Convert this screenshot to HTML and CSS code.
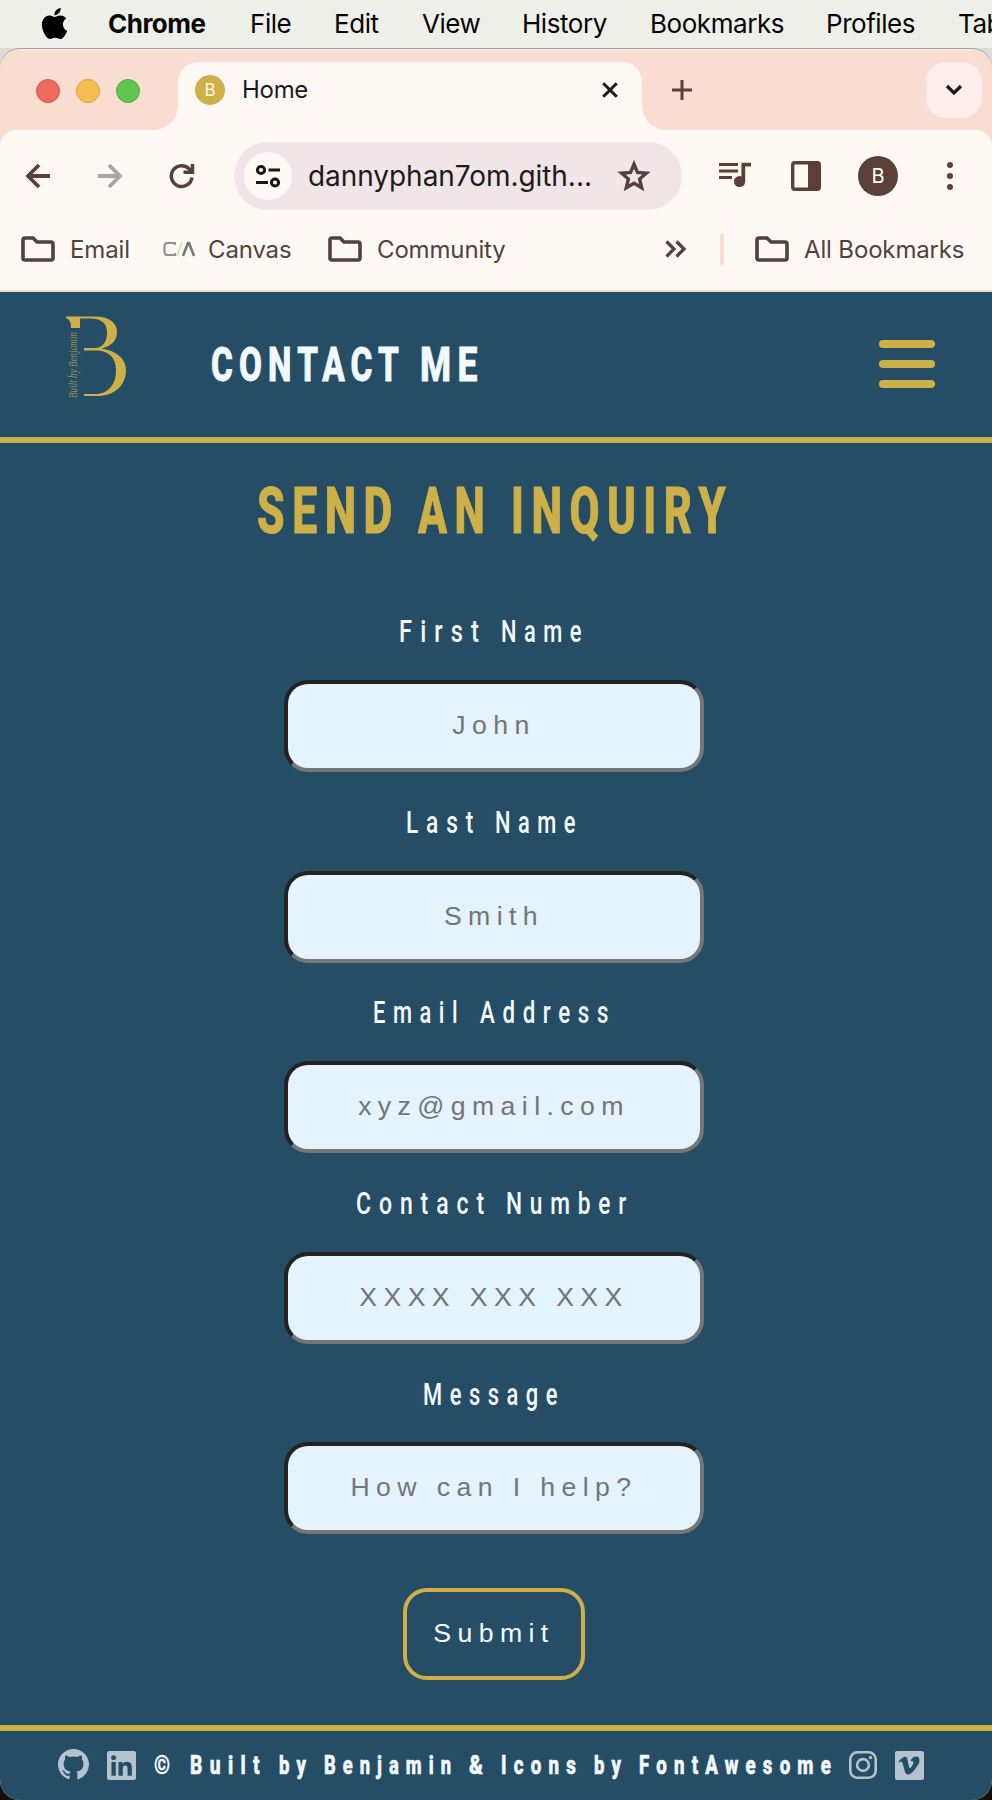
FILE: index.html
```html
<!DOCTYPE html>
<html lang="en">
<head>
<meta charset="utf-8">
<title>Home</title>
<link rel="stylesheet" href="styles.css">
</head>
<body>
<svg class="defs" width="0" height="0">
  <symbol id="folder" viewBox="0 0 34 26"><path d="M4 2H12L16 6H30Q32 6 32 8V22Q32 24 30 24H4Q2 24 2 22V4Q2 2 4 2Z" fill="none" stroke="#51423e" stroke-width="3.6"/></symbol>
</svg>
<nav class="menubar">
  <svg class="apple" viewBox="0 0 24 24"><path d="M12.152 6.896c-.948 0-2.415-1.078-3.96-1.04-2.04.027-3.91 1.183-4.961 3.014-2.117 3.675-.546 9.103 1.519 12.09 1.013 1.454 2.208 3.09 3.792 3.039 1.52-.065 2.09-.987 3.935-.987 1.831 0 2.35.987 3.96.948 1.637-.026 2.676-1.48 3.676-2.948 1.156-1.688 1.636-3.325 1.662-3.415-.039-.013-3.182-1.221-3.22-4.857-.026-3.04 2.48-4.494 2.597-4.559-1.429-2.09-3.623-2.324-4.39-2.376-2-.156-3.675 1.09-4.61 1.09zM15.53 3.83c.843-1.012 1.4-2.427 1.245-3.83-1.207.052-2.662.805-3.532 1.818-.78.896-1.454 2.338-1.273 3.714 1.338.104 2.715-.688 3.559-1.701"/></svg>
  <b>Chrome</b><span>File</span><span>Edit</span><span>View</span><span>History</span><span>Bookmarks</span><span>Profiles</span><span>Tab</span>
</nav>
<div class="window">
  <div class="tabstrip">
    <div class="lights"><i class="red"></i><i class="amber"></i><i class="green"></i></div>
    <div class="tab">
      <span class="favicon">B</span><span class="tab-title">Home</span>
      <svg class="close" width="16" height="16" viewBox="0 0 16 16"><path d="M1.2 1.2L14.8 14.8M14.8 1.2L1.2 14.8" stroke="#1f1a19" stroke-width="3"/></svg>
    </div>
    <svg class="plus" width="20" height="20" viewBox="0 0 20 20"><path d="M10 0V20M0 10H20" stroke="#5b4037" stroke-width="3"/></svg>
    <div class="tabsearch"><svg width="18" height="12" viewBox="0 0 18 12"><path d="M2 2L9 9L16 2" fill="none" stroke="#1f1a19" stroke-width="3.2"/></svg></div>
  </div>
  <div class="toolbar">
    <svg class="back" width="26" height="26" viewBox="0 0 26 26"><path d="M25 13H3M14 2L3 13L14 24" fill="none" stroke="#5b4037" stroke-width="3.8"/></svg>
    <svg class="forward" width="26" height="26" viewBox="0 0 26 26"><path d="M1 13H23M12 2L23 13L12 24" fill="none" stroke="#aaa5a3" stroke-width="3.8"/></svg>
    <svg class="reload" width="26" height="26" viewBox="0 0 26 26"><path d="M23 14.5A10.4 10.4 0 1 1 20.5 6.2L23 8.7M23.5 1V9.3H14.5" fill="none" stroke="#5b4037" stroke-width="3.5"/></svg>
    <div class="omnibox">
      <span class="site"><svg width="26" height="24" viewBox="0 0 26 24" fill="none" stroke="#1b1716" stroke-width="3"><circle cx="6" cy="6" r="3.6"/><path d="M13.5 6H25M1 18.5H13"/><circle cx="20" cy="18.5" r="3.6"/></svg></span>
      <span class="url">dannyphan7om.gith...</span>
      <svg class="star" width="34" height="32" viewBox="0 0 34 32"><path d="M17 4.200L20.400 12.400L29.400 13.200L22.600 19L24.700 27.800L17 23.200L9.300 27.800L11.400 19L4.600 13.200L13.600 12.400Z" fill="none" stroke="#51423e" stroke-width="3.400"/></svg>
    </div>
    <svg class="queue" width="32" height="26" viewBox="0 0 32 26"><path d="M0 2.600H19M0 9H19M0 15.500H13" stroke="#5b4037" stroke-width="3"/><path d="M24.300 19V2.600H32" fill="none" stroke="#5b4037" stroke-width="3.800"/><circle cx="20.600" cy="19.500" r="5.600" fill="#5b4037"/></svg>
    <svg class="panel" width="30" height="30" viewBox="0 0 30 30"><rect x="1.700" y="1.700" width="26.600" height="26.600" rx="2" fill="none" stroke="#5b4037" stroke-width="3.400"/><path d="M17 2H28V28H17Z" fill="#5b4037"/></svg>
    <span class="avatar">B</span>
    <svg class="dots" width="6" height="28" viewBox="0 0 6 28" fill="#5b4037"><circle cx="3" cy="3" r="3"/><circle cx="3" cy="14" r="3"/><circle cx="3" cy="25" r="3"/></svg>
  </div>
  <div class="bookmarks">
    <svg class="f1" width="34" height="26"><use href="#folder"/></svg><span class="t-email">Email</span>
    <svg class="ca" width="34" height="16" viewBox="0 0 34 16" fill="none"><path d="M12 4V2H3L1.500 4V12L3 14H12V12" stroke="#929292" stroke-width="2.200"/><path d="M14 15L19 1" stroke="#bdeab8" stroke-width="1.600"/><path d="M20 15L25 2H26L31 15" stroke="#777" stroke-width="2.600"/></svg><span class="t-canvas">Canvas</span>
    <svg class="f2" width="34" height="26"><use href="#folder"/></svg><span class="t-comm">Community</span>
    <svg class="more" width="22" height="18" viewBox="0 0 22 18"><path d="M1.500 1.500L9 9L1.500 16.500M11.500 1.500L19 9L11.500 16.500" fill="none" stroke="#51423e" stroke-width="3.200"/></svg>
    <i class="divider"></i>
    <svg class="f3" width="34" height="26"><use href="#folder"/></svg><span class="t-all">All Bookmarks</span>
  </div>
  <div class="page">
    <header>
      <svg class="logo" width="64" height="88" viewBox="0 0 64 88">
        <path d="M1 1.500H30C44 1.500 52 7.500 52 17C52 26 46 31 36.500 33.500C52 36 61 44 61 55C61 71 49 81 32 81H19V79H30C44 79 51 69 51 55C51 42 43 35.500 31 35.500H19V33H29C38 33 42 27 42 17.500C42 8 36 3.500 25 3.500H15V13H6C6 7 5 5 1 3Z" fill="#cdb048"/>
        <text transform="translate(12 83) rotate(-90)" textLength="66" lengthAdjust="spacingAndGlyphs">Built by Benjamin</text>
      </svg>
      <svg class="display title" width="300" height="80" viewBox="200 320 300 80">
        <text x="211" y="381" textLength="194" lengthAdjust="spacingAndGlyphs">CONTACT</text>
        <text x="420" y="381" textLength="64" lengthAdjust="spacingAndGlyphs">ME</text>
      </svg>
      <div class="burger"><i></i><i></i><i></i></div>
    </header>
    <main>
      <svg class="display heading" width="992" height="90" viewBox="0 467 992 90">
        <text x="257" y="533" textLength="143" lengthAdjust="spacingAndGlyphs">SEND</text>
        <text x="418" y="533" textLength="74" lengthAdjust="spacingAndGlyphs">AN</text>
        <text x="511" y="533" textLength="222" lengthAdjust="spacingAndGlyphs">INQUIRY</text>
      </svg>
      <form>
        <label><svg class="display" width="992" height="50" viewBox="0 606 992 50"><text x="399" y="642" textLength="88" lengthAdjust="spacingAndGlyphs">First</text><text x="501" y="642" textLength="88" lengthAdjust="spacingAndGlyphs">Name</text></svg>
        <input type="text" placeholder="John"></label>
        <label><svg class="display" width="992" height="50" viewBox="0 797 992 50"><text x="406" y="833" textLength="75" lengthAdjust="spacingAndGlyphs">Last</text><text x="495" y="833" textLength="88" lengthAdjust="spacingAndGlyphs">Name</text></svg>
        <input type="text" placeholder="Smith"></label>
        <label><svg class="display" width="992" height="50" viewBox="0 987 992 50"><text x="373" y="1023" textLength="92" lengthAdjust="spacingAndGlyphs">Email</text><text x="480" y="1023" textLength="136" lengthAdjust="spacingAndGlyphs">Address</text></svg>
        <input type="text" placeholder="xyz@gmail.com"></label>
        <label><svg class="display" width="992" height="50" viewBox="0 1178 992 50"><text x="356" y="1214" textLength="136" lengthAdjust="spacingAndGlyphs">Contact</text><text x="506" y="1214" textLength="128" lengthAdjust="spacingAndGlyphs">Number</text></svg>
        <input type="text" placeholder="XXXX XXX XXX"></label>
        <label><svg class="display" width="992" height="50" viewBox="0 1368 992 50"><text x="423" y="1405" textLength="142" lengthAdjust="spacingAndGlyphs">Message</text></svg>
        <input type="text" placeholder="How can I help?"></label>
        <button type="button">Submit</button>
      </form>
    </main>
    <footer>
      <svg class="github" width="31" height="31" viewBox="0 0 16 16"><path d="M8 0C3.58 0 0 3.58 0 8c0 3.54 2.29 6.53 5.47 7.59.4.07.55-.17.55-.38 0-.19-.01-.82-.01-1.49-2.01.37-2.53-.49-2.69-.94-.09-.23-.48-.94-.82-1.13-.28-.15-.68-.52-.01-.53.63-.01 1.08.58 1.23.82.72 1.21 1.87.87 2.33.66.07-.52.28-.87.51-1.07-1.78-.2-3.64-.89-3.64-3.95 0-.87.31-1.59.82-2.15-.08-.2-.36-1.02.08-2.12 0 0 .67-.21 2.2.82.64-.18 1.32-.27 2-.27s1.36.09 2 .27c1.53-1.04 2.2-.82 2.2-.82.44 1.1.16 1.92.08 2.12.51.56.82 1.27.82 2.15 0 3.07-1.87 3.75-3.65 3.95.29.25.54.73.54 1.48 0 1.07-.01 1.93-.01 2.2 0 .21.15.46.55.38A8.01 8.01 0 0 0 16 8c0-4.42-3.58-8-8-8z"/></svg>
      <svg class="linkedin" width="29" height="29" viewBox="0 32 448 448"><path d="M416 32H31.900C14.300 32 0 46.500 0 64.300v383.400C0 465.500 14.300 480 31.900 480H416c17.600 0 32-14.500 32-32.300V64.300c0-17.800-14.400-32.300-32-32.300zM135.400 416H69V202.200h66.500V416zm-33.200-243c-21.300 0-38.500-17.300-38.500-38.500S80.900 96 102.200 96c21.200 0 38.500 17.300 38.500 38.500 0 21.300-17.200 38.500-38.500 38.500zm282.100 243h-66.400V312c0-24.800-.5-56.700-34.500-56.700-34.600 0-39.900 27-39.900 54.900V416h-66.400V202.200h63.700v29.200h.9c8.900-16.800 30.600-34.500 62.900-34.500 67.200 0 79.700 44.300 79.700 101.900V416z"/></svg>
      <svg class="display credit" width="694" height="50" viewBox="146 1739 694 50">
        <text x="154" y="1774" textLength="24" lengthAdjust="spacingAndGlyphs">©</text>
        <text x="190" y="1774" textLength="77" lengthAdjust="spacingAndGlyphs">Built</text>
        <text x="279" y="1774" textLength="34" lengthAdjust="spacingAndGlyphs">by</text>
        <text x="324" y="1774" textLength="134" lengthAdjust="spacingAndGlyphs">Benjamin</text>
        <text x="469" y="1774" textLength="22" lengthAdjust="spacingAndGlyphs">&amp;</text>
        <text x="501" y="1774" textLength="82" lengthAdjust="spacingAndGlyphs">Icons</text>
        <text x="594" y="1774" textLength="34" lengthAdjust="spacingAndGlyphs">by</text>
        <text x="639" y="1774" textLength="199" lengthAdjust="spacingAndGlyphs">FontAwesome</text>
      </svg>
      <svg class="insta" width="28" height="28" viewBox="0 0 28 28"><rect x="1.300" y="1.300" width="25.400" height="25.400" rx="7" fill="none" stroke="#b4c3cd" stroke-width="2.600"/><circle cx="14" cy="14" r="5.900" fill="none" stroke="#b4c3cd" stroke-width="2.600"/><circle cx="21.500" cy="6.500" r="1.700"/></svg>
      <svg class="vimeo" width="29" height="29" viewBox="0 32 448 448"><path d="M416 32H32C14 32 0 46 0 64v384c0 18 14 32 32 32h384c18 0 32-14 32-32V64c0-18-14-32-32-32zM377 180.800c-1.400 31.500-23.400 74.700-66 129.400-44 57.200-81.300 85.800-111.700 85.800-18.900 0-34.800-17.400-47.900-52.300-25.500-93.300-36.400-148-57.400-148-2.400 0-10.900 5.100-25.400 15.200l-15.200-19.600c37.300-32.800 72.900-69.200 95.200-71.200 25.200-2.400 40.700 14.800 46.500 51.700 20.700 131.200 29.900 151 67.600 91.600 13.500-21.400 20.800-37.700 21.800-48.900 3.500-33.200-25.900-30.900-45.800-22.400 15.900-52.100 46.300-77.400 91.200-76 33.300.9 49 22.500 47.100 64.700z"/></svg>
    </footer>
  </div>
</div>
</body>
</html>
```
FILE: styles.css
```css
* { box-sizing: border-box; }
body { margin: 0; width: 992px; height: 1800px; overflow: hidden; background: linear-gradient(#dcdcd4 200px, #11110d 200px); font-family: Inter, "Liberation Sans", sans-serif; }
svg { display: block; flex: none; }
.defs { position: absolute; }
i { display: block; flex: none; }

.menubar { height: 48px; padding-bottom: 2px; background: #efefe9; display: grid; grid-template-columns: 108px 142px 84px 88px 100px 128px 176px 132px 60px; align-items: center; font-size: 26px; letter-spacing: -0.45px; color: #050505; white-space: nowrap; overflow: hidden; }
.menubar b { letter-spacing: -0.5px; }
.apple { width: 31px; height: 31px; margin: 0 0 0 38.5px; }

.window { height: 1751px; margin-top: 1px; border-radius: 20px; overflow: hidden; background: #f9ddd1; box-shadow: 0 -1px 0 #a3a39e; position: relative; border-top: 2px solid #fbe9e1; }
.tabstrip { height: 79px; background: #f9ddd1; display: flex; padding-top: 11px; }
.lights { width: 178px; padding: 17px 0 0 36px; display: flex; gap: 16px; }
.lights i { width: 24px; height: 24px; border-radius: 50%; }
.red { background: #ec6a5e; border: 1px solid #d35349; }
.amber { background: #f5bf4f; border: 1px solid #d9a33c; }
.green { background: #61c654; border: 1px solid #4fab43; }
.tab { width: 464px; height: 68px; background: #fff9f6; border-radius: 20px 20px 0 0; display: flex; align-items: center; padding: 0 24px 12px 17px; position: relative; }
.tab::before, .tab::after { content: ""; position: absolute; bottom: 0; width: 24px; height: 24px; }
.tab::before { left: -24px; background: radial-gradient(circle at 0 0, #f9ddd1 23.5px, #fff9f6 24px); }
.tab::after { right: -24px; background: radial-gradient(circle at 100% 0, #f9ddd1 23.5px, #fff9f6 24px); }
.favicon { width: 30px; height: 30px; border-radius: 50%; background: #cdb048; color: #fff8e8; font-size: 17px; line-height: 30px; text-align: center; }
.tab-title { margin: -1px 0 0 17px; font-size: 24px; letter-spacing: -0.3px; color: #1f1a19; }
.close { margin-left: auto; }
.plus { margin: 18px 0 0 30px; }
.tabsearch { width: 56px; height: 56px; margin-left: 234px; border-radius: 20px; background: #fceeea; display: grid; place-items: center; }

.toolbar { height: 92px; padding-top: 12px; background: #fff9f6; border-radius: 16px 16px 0 0; display: flex; align-items: flex-start; }
.back { margin: 21px 0 0 25px; }
.forward { margin: 21px 0 0 46px; }
.reload { margin: 21px 0 0 46px; }
.omnibox { width: 448px; height: 68px; margin-left: 39px; border-radius: 34px; background: #f0e6e7; display: flex; align-items: center; padding-left: 10px; }
.site { width: 48px; height: 48px; border-radius: 50%; background: #fff9f6; display: grid; place-items: center; flex: none; }
.url { width: 325px; flex: none; padding-left: 16px; font-size: 28px; letter-spacing: -0.05px; color: #211a1a; white-space: nowrap; }
.queue { margin: 20px 0 0 37px; }
.panel { margin: 19px 0 0 40px; }
.avatar { width: 40px; height: 40px; margin: 14px 0 0 37px; border-radius: 50%; background: #5b4037; color: #fff; font-size: 20px; line-height: 40px; text-align: center; }
.dots { margin: 20px 0 0 49px; }

.bookmarks { height: 70px; padding-bottom: 14px; background: #fff9f6; border-bottom: 2px solid #f5ddd5; display: flex; align-items: center; font-size: 24px; letter-spacing: -0.15px; color: #51423e; white-space: nowrap; }
.f1 { margin-left: 21px; }
.t-email { width: 92px; padding-left: 15px; }
.ca { margin-left: 16px; }
.t-canvas { width: 131px; padding-left: 11px; }
.t-comm { width: 303px; padding-left: 15px; }
.divider { width: 4px; height: 32px; border-radius: 2px; background: #f9ddd1; margin-left: 33px; }
.f3 { margin-left: 31px; }
.t-all { padding-left: 15px; }

.page { height: 1508px; background: #254d65; }
header { height: 151px; border-bottom: 6px solid #cdb048; display: flex; }
.logo { margin: 23px 0 0 65px; overflow: visible; }
.logo text { font: italic 12px "Liberation Serif", serif; fill: #97924f; }
.display { font-family: Roboto, "Liberation Sans", sans-serif; font-size: 32px; font-weight: 500; letter-spacing: 11px; fill: #f3faff; }
.title { margin: 28px 0 0 71px; font-size: 49px; font-weight: 800; letter-spacing: 9px; stroke: #f3faff; stroke-width: 0.8px; }
.burger { margin: 48px 0 0 379px; display: grid; gap: 12px; align-content: start; }
.burger i { width: 56px; height: 8px; border-radius: 4px; background: #cdb048; }

.heading { margin-top: 24px; font-size: 64px; font-weight: 800; letter-spacing: 11px; fill: #cdb048; stroke: #cdb048; stroke-width: 1px; }
form { margin-top: 49px; }
label { display: block; height: 190.6px; }
input { display: block; width: 420px; height: 92px; margin: 24px 0 0 284px; padding: 0 0 1px; border: 4px solid #767676; border-color: #222 #767676 #767676 #222; border-radius: 24px; background: #e4f3fc; font: 26.67px "Liberation Sans", Arial, sans-serif; letter-spacing: 6.4px; text-align: center; }
input::placeholder { color: #757575; opacity: 1; }
button { display: block; width: 182px; height: 92px; margin: 29px 0 0 403px; padding: 0 0 1px; border: 4px solid #cdb048; border-radius: 24px; background: none; color: #f3faff; font: 26.67px "Liberation Sans", Arial, sans-serif; letter-spacing: 6.4px; text-align: center; }

footer { margin-top: 45px; height: 75px; border-top: 6px solid #cdb048; display: flex; fill: #b4c3cd; }
.github { margin: 18px 0 0 58px; }
.linkedin { margin: 20px 0 0 18px; }
.credit { margin: 8px 0 0 10px; font-size: 26px; font-weight: 800; letter-spacing: 10px; stroke: #f3faff; stroke-width: 0.6px; }
.insta { margin: 20px 0 0 9px; }
.vimeo { margin: 20px 0 0 18px; }
```
